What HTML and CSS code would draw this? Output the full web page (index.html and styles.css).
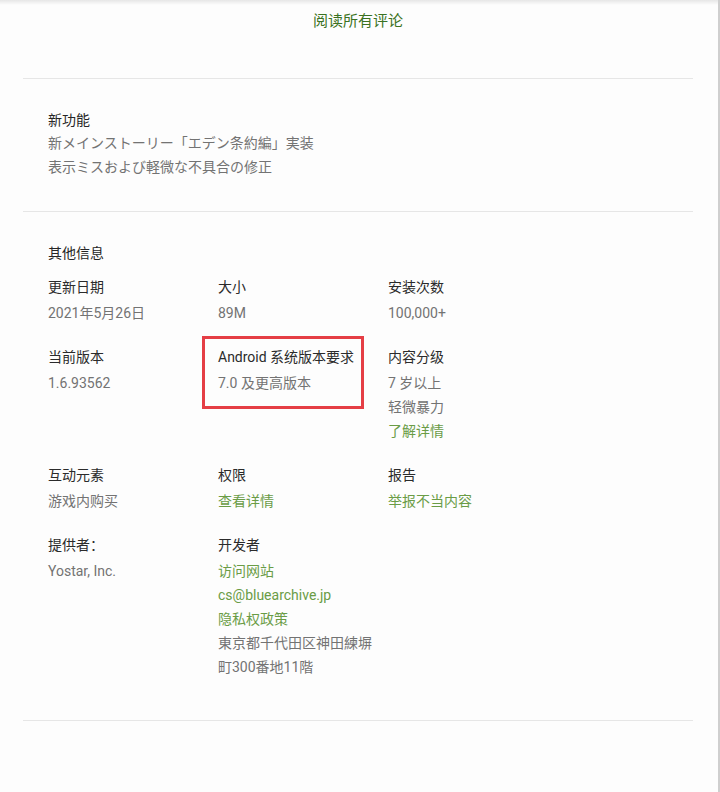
FILE: index.html
```html
<!DOCTYPE html>
<html lang="zh-CN">
<head>
<meta charset="utf-8">
<title>应用详情</title>
<link rel="stylesheet" href="styles.css">
</head>
<body>
<div class="page">
  <div class="topshade"></div>
  <div class="reviews">
    <a class="all-reviews" href="#">阅读所有评论</a>
  </div>
  <section class="section whatsnew">
    <h3 class="section-title">新功能</h3>
    <div class="value">新メインストーリー「エデン条約編」実装</div>
    <div class="value">表示ミスおよび軽微な不具合の修正</div>
  </section>
  <section class="section info">
    <h3 class="section-title">其他信息</h3>
    <div class="grid">
      <div class="item">
        <div class="label">更新日期</div>
        <div class="value">2021年5月26日</div>
      </div>
      <div class="item">
        <div class="label">大小</div>
        <div class="value">89M</div>
      </div>
      <div class="item">
        <div class="label">安装次数</div>
        <div class="value">100,000+</div>
      </div>
      <div class="item">
        <div class="label">当前版本</div>
        <div class="value">1.6.93562</div>
      </div>
      <div class="item highlighted">
        <span class="mark"></span>
        <div class="label">Android 系统版本要求</div>
        <div class="value">7.0 及更高版本</div>
      </div>
      <div class="item">
        <div class="label">内容分级</div>
        <div class="value">7 岁以上</div>
        <div class="value">轻微暴力</div>
        <a class="value link" href="#">了解详情</a>
      </div>
      <div class="item">
        <div class="label">互动元素</div>
        <div class="value">游戏内购买</div>
      </div>
      <div class="item">
        <div class="label">权限</div>
        <a class="value link" href="#">查看详情</a>
      </div>
      <div class="item">
        <div class="label">报告</div>
        <a class="value link" href="#">举报不当内容</a>
      </div>
      <div class="item">
        <div class="label">提供者：</div>
        <div class="value">Yostar, Inc.</div>
      </div>
      <div class="item">
        <div class="label">开发者</div>
        <a class="value link" href="#">访问网站</a>
        <a class="value link" href="#">cs@bluearchive.jp</a>
        <a class="value link" href="#">隐私权政策</a>
        <div class="value">東京都千代田区神田練塀町300番地11階</div>
      </div>
    </div>
  </section>
</div>
</body>
</html>
```

FILE: styles.css
```css
html, body {
  margin: 0;
  padding: 0;
  background: #ffffff;
}

body {
  font-family: Roboto, "Noto Sans CJK SC", sans-serif;
  font-size: 14px;
  color: #333333;
}

.page {
  width: 718px;
  min-height: 792px;
  border-right: 2px solid #cfcfcf;
  background: #fdfdfd;
}

.topshade {
  height: 5px;
  margin-bottom: -5px;
  background: linear-gradient(rgba(0, 0, 0, 0.09), rgba(0, 0, 0, 0));
}

.reviews {
  margin: 0 25px 0 23px;
  padding: 9px 0 45px;
  text-align: center;
  line-height: 24px;
}

.all-reviews {
  font-size: 15px;
  color: #3b7222;
  text-decoration: none;
}

.section {
  margin: 0 25px 0 23px;
  padding: 30px 0 0 25px;
  border-top: 1px solid #e6e6e6;
}

.whatsnew {
  padding-bottom: 32px;
}

.info {
  padding-bottom: 41px;
  border-bottom: 1px solid #e6e6e6;
}

.section-title {
  margin: 0;
  font-size: 14px;
  font-weight: 400;
  line-height: 22px;
  color: #262626;
}

.info .section-title {
  margin-bottom: 11px;
}

.value {
  display: block;
  line-height: 24px;
  color: #737373;
  text-decoration: none;
}

.link {
  color: #6a9c46;
}

.grid {
  display: grid;
  grid-template-columns: 160px 160px 160px;
  column-gap: 10px;
  row-gap: 20px;
}

.item {
  position: relative;
}

.label {
  line-height: 24px;
  margin-bottom: 2px;
  color: #2b2b2b;
  font-weight: 400;
}

.mark {
  position: absolute;
  left: -16px;
  top: -9px;
  width: 162px;
  height: 73px;
  box-sizing: border-box;
  border: 3px solid #e53e45;
}
```
